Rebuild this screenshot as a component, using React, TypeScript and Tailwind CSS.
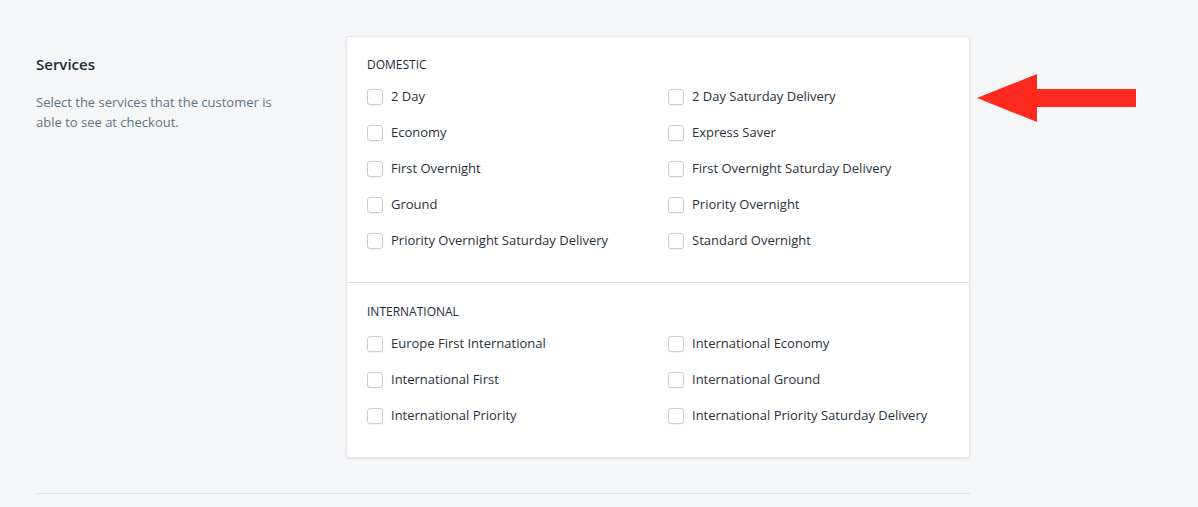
import React from 'react';

const domestic = [
  '2 Day',
  '2 Day Saturday Delivery',
  'Economy',
  'Express Saver',
  'First Overnight',
  'First Overnight Saturday Delivery',
  'Ground',
  'Priority Overnight',
  'Priority Overnight Saturday Delivery',
  'Standard Overnight',
];

const international = [
  'Europe First International',
  'International Economy',
  'International First',
  'International Ground',
  'International Priority',
  'International Priority Saturday Delivery',
];

const ServiceGroup: React.FC<{ title: string; items: string[]; bordered?: boolean }> = ({ title, items, bordered }) => (
  <div className={`px-5 pb-[31px] ${bordered ? 'border-t border-[#dfe3e8] pt-[21px]' : 'pt-5'}`}>
    <div className="h-4 text-xs leading-4 uppercase text-[#212b36]">{title}</div>
    <div className="mt-[14px] grid grid-cols-2 gap-x-5 gap-y-4">
      {items.map((item) => (
        <label key={item} className="flex h-5 items-center gap-2 text-[13px] text-[#2a323b]">
          <span className="h-4 w-4 shrink-0 rounded-[3px] border border-[#c4cdd5] bg-white shadow-[0_1px_1px_rgba(0,0,0,0.04)]" />
          <span>{item}</span>
        </label>
      ))}
    </div>
  </div>
);

export default function App() {
  return (
    <div
      className="relative min-h-[507px] bg-[#f4f6f8] pl-9 pt-9"
      style={{ fontFamily: '"Open Sans", "Noto Sans", sans-serif' }}
    >
      <div className="w-[934px]">
        <div className="flex">
          <div className="w-[310px] shrink-0 pr-[55px] pt-[18px]">
            <h2 className="text-[15px] font-semibold leading-5 text-[#212b36]">Services</h2>
            <p className="mt-[18px] text-[13px] leading-5 text-[#637381]">
              Select the services that the customer is able to see at checkout.
            </p>
          </div>
          <div className="w-[624px] rounded-[3px] border border-[#e4e7eb] bg-white shadow-[0_1px_2px_rgba(63,63,68,0.12)]">
            <ServiceGroup title="Domestic" items={domestic} />
            <ServiceGroup title="International" items={international} bordered />
          </div>
        </div>
        <div className="mt-[35px] border-t border-[#dfe3e8]" />
      </div>

      <svg className="absolute left-[976px] top-[73px]" width="162" height="50" viewBox="0 0 162 50">
        <polygon points="1,25 61,1 61,16 160,16 160,34 61,34 61,49" fill="#ff2a1f" />
      </svg>
    </div>
  );
}
